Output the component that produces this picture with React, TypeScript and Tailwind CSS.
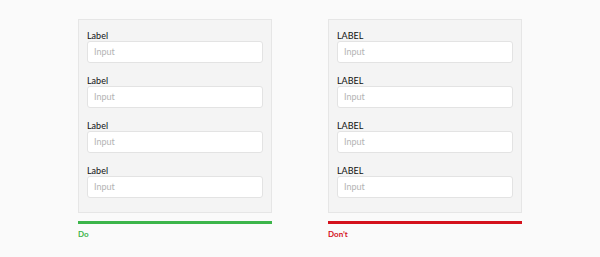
import React from "react";

const Field = ({ label }: { label: string }) => (
  <div className="flex flex-col">
    <div className="h-[13px] text-[9px] leading-[13px] text-[#111111] pt-[1px]">{label}</div>
    <div className="h-[22px] w-full rounded-[3px] border border-[#e3e3e3] bg-white flex items-center pl-[6px] text-[9px] text-[#b4b4b4]">
      Input
    </div>
  </div>
);

const Panel = ({
  upper,
  color,
  caption,
}: {
  upper: boolean;
  color: string;
  caption: string;
}) => (
  <div className="flex flex-col w-[194px]">
    <div className="h-[194px] border border-[#e6e6e6] bg-[#f4f4f4] px-[8px] pt-[8px] flex flex-col gap-[10px]">
      {[0, 1, 2, 3].map((i) => (
        <Field key={i} label={upper ? "LABEL" : "Label"} />
      ))}
    </div>
    <div className={`mt-[8px] h-[3px] w-full ${color === "green" ? "bg-[#3cb54a]" : "bg-[#d4111c]"}`} />
    <div
      className={`mt-[5px] text-[8px] leading-[10px] font-bold ${
        color === "green" ? "text-[#3cb54a]" : "text-[#d4111c]"
      }`}
    >
      {caption}
    </div>
  </div>
);

export default function App() {
  return (
    <div
      className="w-[600px] h-[257px] bg-[#fafafa] flex justify-center gap-[56px] pt-[19px]"
      style={{ fontFamily: "Lato, 'Liberation Sans', sans-serif" }}
    >
      <Panel upper={false} color="green" caption="Do" />
      <Panel upper={true} color="red" caption="Don’t" />
    </div>
  );
}
